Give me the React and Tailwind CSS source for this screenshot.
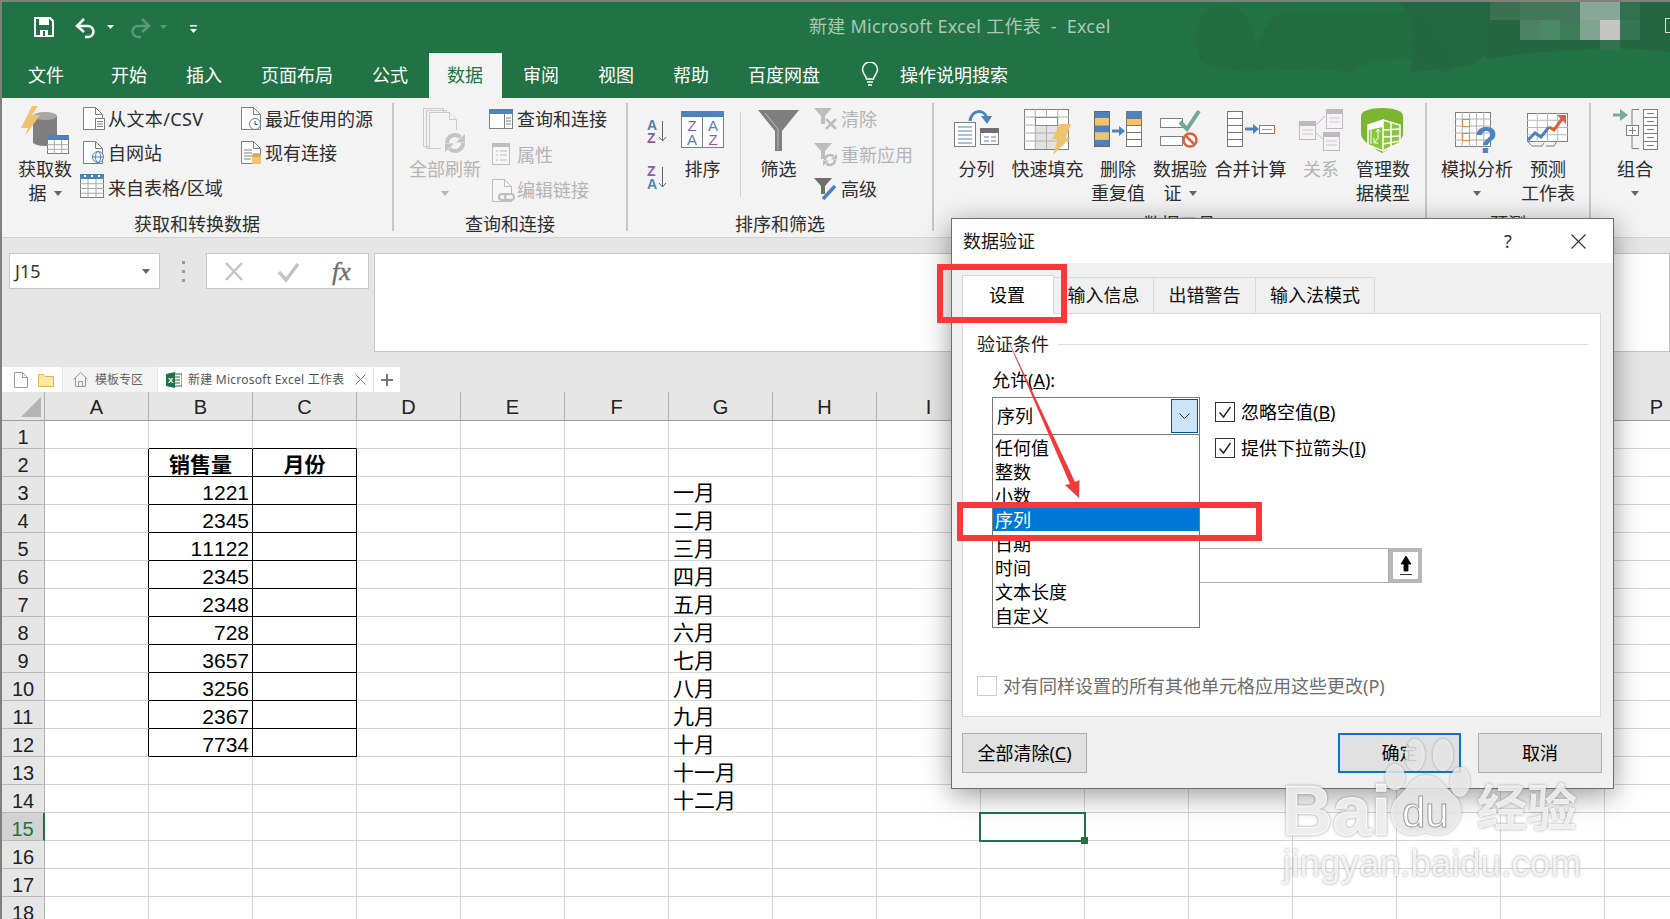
import React from 'react';

const Ico = ({ x, y, w, h, children }) => (
  <svg width={w} height={h} viewBox={`${x} ${y} ${w} ${h}`} className="block flex-none overflow-visible">{children}</svg>
);
const BLUE = '#4e82bc', GR = '#7f7f7f', OR = '#f0c36d', LG = '#bdbdbd', PUR = '#8e5ba8';

const doc = (x, y, c = GR, f = '#fff') => (
  <g fill={f} stroke={c}>
    <path d={`M${x + .5} ${y + .5}h12l7 7v15h-19z`} />
    <path d={`M${x + 12.5} ${y + .5}v7h7`} fill="none" />
  </g>
);
const Caret = ({ c = '#666' }) => (
  <svg width="8" height="5" viewBox="0 0 8 5" className="inline-block flex-none"><path d="M0 0h8L4 5z" fill={c} /></svg>
);

const Large = ({ w, icon, lines, caret, dis }) => (
  <div className={`flex flex-col items-center flex-none ${w} ${dis ? 'text-[#b4b4b4]' : 'text-[#2e2e2e]'}`}>
    <div className="h-[59px] flex justify-center">{icon}</div>
    {lines.map((t, i) => <div key={i} className="leading-[24px] whitespace-nowrap flex items-center gap-[7px]">{t}{caret && i === lines.length - 1 && <Caret />}</div>)}
  </div>
);
const CaretLine = ({ c }) => <div className="h-[24px] flex items-center"><Caret c={c} /></div>;

const Small = ({ iw, icon, text, dis, cls }) => (
  <div className={`h-[35px] flex items-center whitespace-nowrap ${dis ? 'text-[#b4b4b4]' : 'text-[#2e2e2e]'} ${cls || ''}`}>
    <div className={`${iw} h-[35px] flex-none`}>{icon}</div><span>{text}</span>
  </div>
);

const Group = ({ w, label, children }) => (
  <div className={`flex flex-none h-full ${w}`}>
    <div className="flex-1 min-w-0 flex flex-col overflow-hidden">
      <div className="h-[114px] flex">{children}</div>
      <div className="leading-[24px] text-center text-[#2e2e2e] whitespace-nowrap">{label}</div>
    </div>
    <div className="w-[2px] bg-[#c8c8c8] mt-[5px] mb-[6px] flex-none"></div>
  </div>
);

const gridLines = (x, y, w, h, cols, rows, c = '#a6a6a6') => {
  const out = [];
  for (let i = 1; i < cols; i++) out.push(<path key={'c' + i} d={`M${x + w * i / cols} ${y}v${h}`} stroke={c} />);
  for (let i = 1; i < rows; i++) out.push(<path key={'r' + i} d={`M${x} ${y + h * i / rows}h${w}`} stroke={c} />);
  return out;
};

const IcoGet = () => (
  <Ico x={21} y={98} w={48} h={59}>
    <ellipse cx="45" cy="142" rx="12" ry="4" fill={GR} />
    <rect x="33" y="116" width="24" height="27" fill={GR} />
    <ellipse cx="45" cy="116" rx="12" ry="4" fill="#a8a8a8" />
    <path d="M32 106L21 128h7l-3 8 15-21h-8l6-9z" fill={OR} />
    <rect x="47.500" y="135.500" width="21" height="18" fill="#fff" stroke={GR} />
    <rect x="47" y="135" width="22" height="5" fill={BLUE} />
    {gridLines(47, 140, 22, 14, 3, 3)}
  </Ico>
);
const DocLines = ({ x, y }) => (
  <g>
    <rect x={x + .5} y={y + .5} width="9" height="11" fill="#fff" stroke={GR} />
    <path d={`M${x + 2} ${y + 3.5}h6M${x + 2} ${y + 6}h6M${x + 2} ${y + 8.5}h6`} stroke={GR} />
  </g>
);
const I1 = () => <Ico x={80} y={102} w={28} h={35}>{doc(83, 107)}<DocLines x={95} y={118} /></Ico>;
const I2 = () => (
  <Ico x={80} y={136} w={28} h={35}>{doc(83, 141)}
    <circle cx="98" cy="157" r="5.500" fill="#fff" stroke={BLUE} />
    <ellipse cx="98" cy="157" rx="2.500" ry="5.500" fill="none" stroke={BLUE} />
    <path d="M92.500 157h11" stroke={BLUE} />
  </Ico>
);
const I3 = () => (
  <Ico x={80} y={171} w={28} h={35}>
    <rect x="80.500" y="174.500" width="23" height="23" fill="#fff" stroke={GR} />
    {gridLines(80, 179, 24, 19, 3, 4)}
    <rect x="80" y="174" width="24" height="5" fill={BLUE} />
    <path d="M84 175h2v2h-2zM91 175h2v2h-2zM98 175h2v2h-2z" fill="#fff" />
  </Ico>
);
const I4 = () => (
  <Ico x={240} y={102} w={25} h={35}>{doc(241, 107)}
    <circle cx="255" cy="124" r="5.500" fill="#fff" stroke={BLUE} />
    <path d="M255 121v3.500h2.500" stroke="#444" fill="none" />
  </Ico>
);
const I5 = () => (
  <Ico x={240} y={136} w={25} h={35}>{doc(241, 141)}
    <path d="M244 150h8M244 153h8M244 156h8M244 159h7" stroke={GR} />
    <rect x="252" y="155" width="9" height="9" fill={OR} />
    <ellipse cx="256.500" cy="155" rx="4.500" ry="2" fill="#d9a95a" />
  </Ico>
);
const Refresh = ({ cx, cy, r, c, sw = 3 }) => (
  <g fill="none" stroke={c} strokeWidth={sw}>
    <path d={`M${cx - r} ${cy}a${r} ${r} 0 0 1 ${r * 1.7} ${-r * .7}`} />
    <path d={`M${cx + r} ${cy}a${r} ${r} 0 0 1 ${-r * 1.7} ${r * .7}`} />
    <path d={`M${cx + r + 2} ${cy - r - 1}v${r + .5}h${-r - 1}z`} fill={c} stroke="none" />
    <path d={`M${cx - r - 2} ${cy + r + 1}v${-r - .5}h${r + 1}z`} fill={c} stroke="none" />
  </g>
);
const IRefreshAll = () => (
  <Ico x={426} y={98} w={44} h={59}>
    <g fill="#f3f3f3" stroke="#c9c9c9">
      <path d="M426.500 108.500h20v38h-20zM429.500 110.500h20v38h-20z" />
      <path d="M432.500 112.500h20l7 7v29h-27z" />
      <path d="M452.500 112.500v7h7" />
    </g>
    <rect x="444" y="130" width="26" height="26" fill="#f3f3f3" />
    <Refresh cx={458} cy={143} r={8} c="#c4c4c4" sw={4} />
  </Ico>
);
const IQuery = () => (
  <Ico x={489} y={102} w={28} h={35}>
    <rect x="489.500" y="109.500" width="23" height="19" fill="#fff" stroke={GR} />
    <rect x="489" y="109" width="24" height="5" fill={BLUE} />
    <path d="M504.500 114v15M506 118h5M506 121h5M506 124h5" stroke={GR} />
  </Ico>
);
const IProp = () => (
  <Ico x={489} y={138} w={28} h={35}>
    <rect x="492.500" y="143.500" width="17" height="21" fill="#f6f6f6" stroke={LG} />
    <rect x="492" y="143" width="18" height="4" fill={LG} />
    <path d="M496 151h2M500 151h7M496 155h2M500 155h7M496 160h2M500 160h7" stroke={LG} />
  </Ico>
);
const ILink = () => (
  <Ico x={489} y={172} w={28} h={35}>
    {doc(492, 178, LG, '#f6f6f6')}
    <g fill="#f3f3f3" stroke={LG} strokeWidth="2">
      <rect x="499" y="193" width="9" height="6" rx="3" />
      <rect x="505" y="193" width="9" height="6" rx="3" />
    </g>
  </Ico>
);
const IAZ = ({ flip }) => (
  <Ico x={647} y={flip ? 164 : 118} w={21} h={27}>
    <text x="647" y={flip ? 176 : 130} fontSize="14" fontWeight="700" fontFamily="Liberation Sans" fill={flip ? PUR : BLUE}>{flip ? 'Z' : 'A'}</text>
    <text x="647" y={flip ? 189 : 143} fontSize="14" fontWeight="700" fontFamily="Liberation Sans" fill={flip ? BLUE : PUR}>{flip ? 'A' : 'Z'}</text>
    <path d={`M662.500 ${flip ? 167 : 121}v20M659 ${flip ? 183 : 137}l3.500 4 3.500-4`} stroke="#666" fill="none" />
  </Ico>
);
const ISort = () => (
  <Ico x={681} y={98} w={43} h={59}>
    <rect x="681.500" y="111.500" width="42" height="36" fill="#fff" stroke={GR} />
    <rect x="681" y="111" width="43" height="6" fill={BLUE} />
    <path d="M702.500 117v30" stroke={GR} />
    <g fontFamily="Liberation Sans" fontSize="15" textAnchor="middle">
      <text x="692" y="131" fill={PUR}>Z</text><text x="692" y="145" fill={BLUE}>A</text>
      <text x="713" y="131" fill={BLUE}>A</text><text x="713" y="145" fill={PUR}>Z</text>
    </g>
  </Ico>
);
const IFilter = () => (
  <Ico x={758} y={98} w={41} h={59}>
    <path d="M758 110h41l-17 21v20h-7v-20z" fill={GR} />
    <path d="M765 113l13 16v21" stroke="#bdbdbd" fill="none" />
  </Ico>
);
const smallF = (x, y, c) => <path d={`M${x} ${y}h18l-7 8v8h-4v-8z`} fill={c} />;
const IClear = () => (
  <Ico x={814} y={102} w={27} h={35}>{smallF(814, 108, LG)}<path d="M826 119l10 10M836 119l-10 10" stroke={LG} strokeWidth="2.500" /></Ico>
);
const IReapply = () => (
  <Ico x={814} y={138} w={27} h={35}>{smallF(814, 143, LG)}<Refresh cx={830} cy={160} r={5} c={LG} sw={2.500} /></Ico>
);
const IAdv = () => (
  <Ico x={814} y={172} w={27} h={35}>{smallF(814, 178, '#6e6e6e')}<path d="M835 186l-12 13" stroke={BLUE} strokeWidth="3.500" /></Ico>
);
const ISplit = () => (
  <Ico x={954} y={98} w={46} h={59}>
    <rect x="954.500" y="122.500" width="21" height="24" fill="#fff" stroke={GR} />
    <path d="M958 127h14M958 131h14M958 135h14M958 139h14M958 143h14" stroke={BLUE} />
    <rect x="980.500" y="128.500" width="18" height="16" fill="#fff" stroke={GR} />
    <rect x="980" y="128" width="19" height="5" fill="#6e6e6e" />
    <path d="M984 137h5M991 137h5M984 141h5M991 141h5" stroke={BLUE} />
    <path d="M970 121c2-12 14-12 17-3" fill="none" stroke={BLUE} strokeWidth="3" />
    <path d="M981 116h11l-5 8z" fill={BLUE} />
  </Ico>
);
const IFlash = () => (
  <Ico x={1024} y={98} w={48} h={59}>
    <rect x="1024.500" y="109.500" width="44" height="40" fill="#fff" stroke={GR} />
    <rect x="1035" y="126" width="23" height="23" fill="#e2e2e2" />
    {gridLines(1024, 109, 45, 40, 4, 5, '#b0b0b0')}
    <rect x="1035.500" y="117.500" width="22" height="8" fill="#fff" stroke="#6f9f8c" />
    <path d="M1060 124h11l-5 13h5l-18 18 5-16h-6z" fill={OR} />
  </Ico>
);
const IDup = () => (
  <Ico x={1094} y={98} w={48} h={59}>
    {['#4e82bc', OR, '#4e82bc', OR, '#4e82bc'].map((c, i) => <rect key={i} x="1094" y={111 + i * 7.2} width="16" height="7.200" fill={c} />)}
    <rect x="1094.500" y="111.500" width="15" height="35" fill="none" stroke="#666" />
    {['#4e82bc', OR, '#fff', '#fff', '#fff'].map((c, i) => <rect key={i} x="1126.500" y={111.500 + i * 7} width="15" height="7" fill={c} stroke="#777" />)}
    <path d="M1112 131h8" stroke={BLUE} strokeWidth="3" /><path d="M1119 126l6 5-6 5z" fill={BLUE} />
  </Ico>
);
const IValid = () => (
  <Ico x={1160} y={98} w={41} h={59}>
    <rect x="1160.500" y="118.500" width="22" height="9" fill="#fff" stroke={GR} />
    <rect x="1160.500" y="136.500" width="22" height="9" fill="#fff" stroke={GR} />
    <path d="M1180 122l7 7 12-18" fill="none" stroke="#74a996" strokeWidth="4" />
    <circle cx="1190" cy="140" r="6.500" fill="#fff" stroke="#d9603f" strokeWidth="2.500" />
    <path d="M1186 136l8 8" stroke="#d9603f" strokeWidth="2.500" />
  </Ico>
);
const IMerge = () => (
  <Ico x={1226} y={98} w={48} h={59}>
    {[0, 1, 2, 3, 4].map(i => <rect key={i} x="1226.500" y={111.500 + i * 7} width="15" height="7" fill="#fff" stroke="#777" />)}
    <path d="M1244 129h9" stroke={BLUE} strokeWidth="3" /><path d="M1252 124l6 5-6 5z" fill={BLUE} />
    <rect x="1258.500" y="125.500" width="15" height="8" fill="#fff" stroke="#d9603f" />
    <path d="M1261 129.500h10" stroke="#999" />
  </Ico>
);
const IRel = () => {
  const b = (x, y, w, h) => <g key={x}><rect x={x + .5} y={y + .5} width={w} height={h} fill="#f6f3f6" stroke="#bdbabd" /><rect x={x} y={y} width={w + 1} height="5" fill="#bdbabd" /><path d={`M${x + 3} ${y + 9}h${w - 5}M${x + 3} ${y + 13}h${w - 5}`} stroke="#cfc5d0" /></g>;
  return (
    <Ico x={1298} y={98} w={46} h={59}>
      <path d="M1315 126l10-10M1315 132l9 8" stroke="#bdbabd" fill="none" />
      {b(1299, 121, 16, 18)}{b(1326, 109, 16, 19)}{b(1323, 132, 16, 18)}
    </Ico>
  );
};
const IModel = () => (
  <Ico x={1361} y={98} w={44} h={59}>
    <path d="M1361 116c0-5 9-8 21-8s21 3 21 8v18c0 6-10 13-21 19-11-6-21-13-21-19z" fill="#7ab62f" />
    <path d="M1368 125l15-5 17 5v18l-17 8-15-6z" fill="#8cc63f" />
    <path d="M1368 125l15-5v7l-15 3z" fill="#fff" />
    <path d="M1383 120v31l-15-6v-20z" fill="none" stroke="#fff" strokeWidth="1.500" />
    <path d="M1383 120l17 5v18l-17 8" fill="none" stroke="#fff" strokeWidth="1.500" />
    <path d="M1383 130l17-1M1383 137l17-1M1383 144l17-3M1391 123v25" stroke="#fff" strokeWidth="1.500" fill="none" />
    <path d="M1371 128v16" stroke="#fff" />
    <path d="M1378 129v9l-3 4M1376 132l2-3 2 3M1374 138v5h4" stroke="#fff" fill="none" />
  </Ico>
);
const IWhatIf = () => (
  <Ico x={1459} y={98} w={44} h={59}>
    <rect x="1459.500" y="112.500" width="35" height="34" fill="#fff" stroke={GR} />
    {gridLines(1459, 112, 36, 35, 5, 5, '#b0b0b0')}
    <rect x="1466.500" y="119.500" width="7" height="7" fill="#fff" stroke="#e08a3c" />
    <rect x="1466.500" y="133.500" width="7" height="7" fill="#fff" stroke="#e08a3c" />
    <text x="1490" y="153" fontSize="37" fontWeight="700" fontFamily="Liberation Sans" textAnchor="middle" fill={BLUE}>?</text>
  </Ico>
);
const IFore = () => (
  <Ico x={1527} y={98} w={42} h={59}>
    <rect x="1527.500" y="113.500" width="40" height="28" fill="#fff" stroke={GR} />
    {gridLines(1527, 113, 41, 29, 4, 4, '#b8b8b8')}
    <path d="M1527 141l5 5h10l2-3M1546 146h8l3-5" stroke={GR} fill="none" />
    <path d="M1528 140l7-7 6 4 8-10" fill="none" stroke={BLUE} strokeWidth="3" />
    <path d="M1549 127l5 3 8-11" fill="none" stroke="#d9603f" strokeWidth="3" />
    <path d="M1557 115h9v9z" fill="#d9603f" />
  </Ico>
);
const IGroup = () => (
  <Ico x={1612} y={98} w={45} h={59}>
    <path d="M1612 115h9" stroke="#7aab97" strokeWidth="3" /><path d="M1619 109l8 6-8 6z" fill="#7aab97" />
    <path d="M1638 109.500h-7v39h7" fill="none" stroke={GR} />
    <rect x="1625.500" y="125.500" width="12" height="10" fill="#fff" stroke={GR} />
    <path d="M1628 130.500h7M1631.500 127v7" stroke={GR} />
    {[0, 1, 2, 3, 4].map(i => <g key={i}><rect x="1642.500" y={109.500 + i * 8} width="14" height="8" fill="#fff" stroke={GR} /><path d={`M1646 ${113.500 + i * 8}h7`} stroke={BLUE} /></g>)}
  </Ico>
);

const TitleArt = () => (
  <svg width="1668" height="96" viewBox="2 2 1668 96" className="absolute left-0 top-0">
    <path d="M1200 60c-10-30 0-55 22-55 24 0 30 20 34 40 8-12 12-30 30-33h114c20 0 30 8 50 45l-1 18c-12-6-24-16-41-16-20 0-38 0-60 14-20-6-22-2-40-3-35-3-90 8-108-10z" fill="#23693f" opacity=".75" />
    <path d="M1490 2h180v50c-30-2-50-6-90-2-30 2-60 2-92 10-6-6-2-40 2-58z" fill="#236640" />
    <path d="M1398 2h100l-8 50-20 14-60 6c4-20 8-50-12-70z" fill="#236640" opacity=".8" />
    {[
      [1490, 2, 30, 18, '#3b7053'], [1520, 2, 60, 18, '#43775b'], [1580, 2, 40, 18, '#8aa698'], [1620, 2, 20, 18, '#33704f'],
      [1520, 20, 20, 20, '#4c8263'], [1540, 20, 20, 20, '#4c8868'], [1560, 20, 20, 20, '#3e7b59'], [1580, 20, 20, 20, '#7fa491'], [1600, 20, 20, 20, '#c5c5c5'], [1620, 20, 20, 20, '#387556'],
      [1600, 40, 20, 10, '#357050'],
    ].map((r, i) => <rect key={i} x={r[0]} y={r[1]} width={r[2]} height={r[3]} fill={r[4]} />)}
    <rect x="1665.500" y="18.500" width="10" height="14" fill="none" stroke="#cfe3d8" />
  </svg>
);

const cols = ['A', 'B', 'C', 'D', 'E', 'F', 'G', 'H', 'I', 'J', 'K', 'L', 'M', 'N', 'O', 'P'];
const sales = { 3: 1221, 4: 2345, 5: 11122, 6: 2345, 7: 2348, 8: 728, 9: 3657, 10: 3256, 11: 2367, 12: 7734 };
const months = ['一月', '二月', '三月', '四月', '五月', '六月', '七月', '八月', '九月', '十月', '十一月', '十二月'];

const Cell = ({ c, r }) => {
  const ci = cols.indexOf(c);
  const inBox = (ci === 1 || ci === 2) && r >= 2 && r <= 12;
  const rightBlack = (ci === 0 || inBox) && r >= 2 && r <= 12;
  const bottomBlack = (ci === 1 || ci === 2) && r >= 1 && r <= 12;
  let body = null;
  if (r === 2 && c === 'B') body = <div className="text-center font-bold text-[21px]">销售量</div>;
  if (r === 2 && c === 'C') body = <div className="text-center font-bold text-[21px]">月份</div>;
  if (c === 'B' && sales[r]) body = <div className="text-right pr-[3px] [font-kerning:none]">{sales[r]}</div>;
  if (c === 'G' && r >= 3 && r <= 14) body = <div className="pl-[4px]">{months[r - 3]}</div>;
  return (
    <div className={`relative w-[104px] h-[28px] flex-none border-r border-b leading-[32px] text-[21px] text-black whitespace-nowrap ${rightBlack ? 'border-r-black' : 'border-r-[#d4d4d4]'} ${bottomBlack ? 'border-b-black' : 'border-b-[#d4d4d4]'}`}>
      {body}
      {c === 'J' && r === 15 && (
        <div className="absolute left-[-2px] top-[-1px] w-[107px] h-[30px] border-2 border-[#217346] z-10">
          <div className="absolute right-[-4px] bottom-[-4px] w-[7px] h-[7px] bg-[#217346]"></div>
        </div>
      )}
    </div>
  );
};

const Check = ({ on, dis }) => (
  <div className={`w-[20px] h-[20px] flex-none border flex items-center justify-center bg-white ${dis ? 'border-[#cccccc]' : 'border-[#333333]'}`}>
    {on && <svg width="14" height="14" viewBox="0 0 14 14"><path d="M1.500 7.500l4 4.500 7-10" fill="none" stroke="#222" strokeWidth="1.400" /></svg>}
  </div>
);
const DlgBtn = ({ w, children, primary }) => (
  <div className={`${w} h-[40px] flex-none flex items-center justify-center bg-[#e1e1e1] text-black ${primary ? 'border-2 border-[#0078d7]' : 'border border-[#adadad]'}`}><span>{children}</span></div>
);

export default function App() {
  return (
    <div className="relative w-[1670px] h-[919px] overflow-hidden bg-white border-l-2 border-t-2 border-[#808080] text-[18px] font-['Noto_Sans','Noto_Sans_CJK_SC',sans-serif]">
      {/* title + tabs */}
      <div className="relative h-[96px] bg-[#217346]">
        <TitleArt />
        <div className="relative h-[51px] flex items-start pl-[32px]">
          <svg width="170" height="51" viewBox="34 2 170 51" className="flex-none">
            <path d="M35 18h15l3 3v15H35z" fill="none" stroke="#fff" strokeWidth="2" />
            <path d="M39 18h10v7H39zM40 30h8v6h-8z" fill="#fff" /><path d="M43 31h2v5h-2z" fill="#217346" />
            <path d="M84 19l-7 7 7 6M77 26h11a5.500 5.500 0 0 1 0 11h-3" fill="none" stroke="#fff" strokeWidth="2.500" />
            <path d="M107 25h7l-3.500 4z" fill="#fff" />
            <path d="M142 19l7 7-7 6M149 26h-11a5.500 5.500 0 0 0 0 11h3" fill="none" stroke="#5a9a78" strokeWidth="2.500" />
            <path d="M160 25h7l-3.500 4z" fill="#5a9a78" />
            <path d="M190 25h7v1.500h-7zM190 29h7l-3.500 4z" fill="#fff" />
          </svg>
          <div className="ml-[605px] mt-[12px] leading-[24px] tracking-[0.25px] text-[#a9c8b6] whitespace-nowrap">新建 Microsoft Excel 工作表&nbsp; -&nbsp; Excel</div>
        </div>
        <div className="relative h-[45px] flex items-stretch pl-[8px] text-white">
          {['文件', '开始', '插入', '页面布局', '公式', '数据', '审阅', '视图', '帮助', '百度网盘'].map(t => (
            <div key={t} className={`px-[18px] flex items-center pb-[1px] ${t === '文件' ? 'mr-[11px]' : 'mr-[3px]'} ${t === '数据' ? 'bg-[#f3f3f3] text-[#217346] w-[73px]' : ''}`}>{t}</div>
          ))}
          <div className="ml-[20px] flex items-center gap-[21px] pb-[1px]">
            <svg width="18" height="26" viewBox="0 0 18 26" className="flex-none"><path d="M5.500 17c0-3-4-5-4-9.500a7.500 7.500 0 0 1 15 0c0 4.500-4 6.500-4 9.500zM6 20h6M7 23h4" fill="none" stroke="#fff" strokeWidth="1.500" /></svg>
            操作说明搜索
          </div>
        </div>
      </div>

      {/* ribbon */}
      <div className="h-[140px] bg-[#f3f3f3] border-b border-[#d2d2d2] flex overflow-hidden">
        <Group w="w-[392px]" label="获取和转换数据">
          <Large w="w-[54px] ml-[16px]" icon={<IcoGet />} lines={['获取数', '据']} caret />
          <div className="w-[160px] ml-[8px] pt-[4px] flex-none">
            <Small iw="w-[28px]" icon={<I1 />} text={<span className="tracking-[0.4px]">从文本/CSV</span>} />
            <Small iw="w-[28px]" icon={<I2 />} text="自网站" cls="-mt-[1px]" />
            <Small iw="w-[28px]" icon={<I3 />} text="来自表格/区域" />
          </div>
          <div className="pt-[4px]">
            <Small iw="w-[25px]" icon={<I4 />} text="最近使用的源" />
            <Small iw="w-[25px]" icon={<I5 />} text="现有连接" cls="-mt-[1px]" />
          </div>
        </Group>
        <Group w="w-[234px]" label="查询和连接">
          <div className="flex flex-col items-center w-[72px] ml-[15px] flex-none text-[#b4b4b4]">
            <div className="h-[59px]"><IRefreshAll /></div>
            <div className="leading-[24px] whitespace-nowrap">全部刷新</div>
            <CaretLine c="#b4b4b4" />
          </div>
          <div className="ml-[8px] pt-[4px]">
            <Small iw="w-[28px]" icon={<IQuery />} text="查询和连接" />
            <Small iw="w-[28px]" icon={<IProp />} text="属性" dis cls="mt-[1px]" />
            <Small iw="w-[28px]" icon={<ILink />} text="编辑链接" dis />
          </div>
        </Group>
        <Group w="w-[306px]" label="排序和筛选">
          <div className="w-[21px] ml-[19px] flex-none flex flex-col pt-[20px] gap-[19px]"><IAZ /><IAZ flip /></div>
          <Large w="w-[43px] ml-[13px]" icon={<ISort />} lines={['排序']} />
          <div className="w-px h-[85px] mt-[14px] ml-[16px] bg-[#cfcfcf] flex-none"></div>
          <Large w="w-[41px] ml-[17px]" icon={<IFilter />} lines={['筛选']} />
          <div className="ml-[15px] pt-[4px]">
            <Small iw="w-[27px]" icon={<IClear />} text="清除" dis />
            <Small iw="w-[27px]" icon={<IReapply />} text="重新应用" dis cls="mt-[1px] -mb-[1px]" />
            <Small iw="w-[27px]" icon={<IAdv />} text="高级" />
          </div>
        </Group>
        <Group w="w-[493px]" label="数据工具">
          <Large w="w-[71px] ml-[7px]" icon={<ISplit />} lines={['分列']} />
          <Large w="w-[71px]" icon={<IFlash />} lines={['快速填充']} />
          <Large w="w-[70px]" icon={<IDup />} lines={['删除', '重复值']} />
          <Large w="w-[54px]" icon={<IValid />} lines={['数据验', '证']} caret />
          <Large w="w-[71px] ml-[8px]" icon={<IMerge />} lines={['合并计算']} />
          <Large w="w-[70px]" icon={<IRel />} lines={['关系']} dis />
          <Large w="w-[54px]" icon={<IModel />} lines={['管理数', '据模型']} />
        </Group>
        <Group w="w-[164px]" label="预测">
          <div className="flex flex-col items-center w-[72px] ml-[14px] flex-none text-[#2e2e2e]">
            <div className="h-[59px]"><IWhatIf /></div>
            <div className="leading-[24px] whitespace-nowrap">模拟分析</div>
            <CaretLine />
          </div>
          <Large w="w-[54px] ml-[8px]" icon={<IFore />} lines={['预测', '工作表']} />
        </Group>
        <div className="flex flex-none h-full">
          <div className="flex flex-col items-center w-[54px] ml-[17px] flex-none text-[#2e2e2e]">
            <div className="h-[59px]"><IGroup /></div>
            <div className="leading-[24px] whitespace-nowrap">组合</div>
            <CaretLine />
          </div>
        </div>
      </div>

      {/* formula area */}
      <div className="h-[129px] bg-[#e6e6e6] flex items-start pt-[15px] pl-[7px]">
        <div className="w-[151px] h-[36px] flex-none bg-white border border-[#c6c6c6] flex items-center justify-between pl-[5px] pr-[9px] text-[#333]">J15<Caret /></div>
        <div className="w-[46px] h-[36px] flex-none flex flex-col items-center justify-center gap-[6px]">
          <div className="w-[3px] h-[3px] bg-[#9a9a9a]"></div><div className="w-[3px] h-[3px] bg-[#9a9a9a]"></div><div className="w-[3px] h-[3px] bg-[#9a9a9a]"></div>
        </div>
        <div className="w-[163px] h-[36px] flex-none bg-white border border-[#c6c6c6]">
          <svg width="161" height="34" viewBox="207 254 161 34">
            <path d="M226 263l16 17M242 263l-16 17" stroke="#c4c4c4" strokeWidth="2.500" />
            <path d="M279 272l7 8 12-16" fill="none" stroke="#c4c4c4" strokeWidth="3.500" />
            <text x="332" y="280" fontSize="26" fontStyle="italic" fontFamily="Liberation Serif" fill="#6e6e6e" stroke="#6e6e6e" strokeWidth=".4">fx</text>
          </svg>
        </div>
        <div className="flex-1 h-[99px] ml-[5px] bg-white border border-[#c6c6c6]"></div>
      </div>

      {/* file tab strip */}
      <div className="h-[25px] flex bg-[#e6e6e6] text-[12px] text-[#666]">
        <div className="w-[60px] bg-white flex items-center gap-[10px] pl-[12px] flex-none">
          <svg width="14" height="16" viewBox="0 0 14 16"><path d="M.500.500h8l5 5v10h-13zM8.500.500v5h5" fill="#fff" stroke="#9a9a9a" /></svg>
          <svg width="16" height="14" viewBox="0 0 16 14"><path d="M.500 1.500h5l1.500 2h8.500v10H.500z" fill="#ffe7a0" stroke="#d9b65c" /></svg>
        </div>
        <div className="w-[94px] ml-px bg-[#f3f3f3] flex items-center gap-[7px] pl-[10px] flex-none">
          <svg width="15" height="15" viewBox="0 0 15 15"><path d="M.500 7.500l7-7 7 7M2.500 6v8.500h10V6M5.500 14.500v-5h4v5" fill="none" stroke="#999" /></svg>
          模板专区
        </div>
        <div className="w-[215px] ml-px bg-white flex items-center gap-[6px] pl-[8px] flex-none text-[#555]">
          <svg width="16" height="16" viewBox="0 0 16 16" className="flex-none">
            <rect x="6" y="2" width="10" height="12" fill="#fff" stroke="#217346" />
            <path d="M9 5h5M9 8h5M9 11h5" stroke="#217346" />
            <path d="M0 2l9-2v16l-9-2z" fill="#217346" />
            <text x="2" y="11" fontSize="8" fontWeight="700" fontFamily="Liberation Sans" fill="#fff">X</text>
          </svg>
          <span className="whitespace-nowrap tracking-[0.25px]">新建 Microsoft Excel 工作表</span>
          <svg width="11" height="11" viewBox="0 0 11 11" className="flex-none ml-auto mr-[7px]"><path d="M.500.500l10 10M10.500.500l-10 10" stroke="#777" /></svg>
        </div>
        <div className="w-[26px] ml-px bg-white flex items-center justify-center flex-none">
          <svg width="12" height="12" viewBox="0 0 12 12"><path d="M6 0v12M0 6h12" stroke="#777" strokeWidth="2" /></svg>
        </div>
      </div>

      {/* sheet */}
      <div className="flex h-[29px] bg-[#e6e6e6] border-b border-[#9e9e9e] text-[20px] text-[#222] font-['Liberation_Sans','Noto_Sans_CJK_SC',sans-serif]">
        <div className="w-[43px] h-[28px] flex-none border-r border-[#b0b0b0] flex items-end justify-end pr-[3px] pb-[3px]">
          <svg width="20" height="20" viewBox="0 0 20 20"><path d="M20 0v20H0z" fill="#b4b4b4" /></svg>
        </div>
        {cols.map(c => <div key={c} className="w-[104px] h-[28px] flex-none text-center leading-[31px] border-r border-[#b0b0b0]">{c}</div>)}
      </div>
      {Array.from({ length: 18 }, (_, i) => i + 1).map(r => (
        <div key={r} className="flex h-[28px] font-['Liberation_Sans','Noto_Sans_CJK_SC',sans-serif]">
          <div className={`w-[43px] h-[28px] flex-none text-center text-[20px] leading-[32px] border-b border-[#b8b8b8] ${r === 15 ? 'bg-[#d2d2d2] text-[#217346] border-r-2 border-r-[#217346]' : 'bg-[#e6e6e6] text-[#222] border-r border-r-[#b0b0b0]'}`}>{r}</div>
          {cols.map(c => <Cell key={c} c={c} r={r} />)}
        </div>
      ))}

      {/* dialog */}
      <div className="absolute left-[949px] top-[216px] w-[663px] h-[571px] bg-[#f0f0f0] border border-[#6e6e6e] shadow-[0_6px_26px_rgba(0,0,0,0.4)] text-black z-20">
        <div className="h-[44px] bg-white flex items-center pl-[11px] relative">
          <span className="text-[#1a1a1a]">数据验证</span>
          <span className="ml-[463px] w-[20px] text-center text-[#333]">?</span>
          <svg width="15" height="15" viewBox="0 0 15 15" className="ml-[53px]"><path d="M.500.500l14 14M14.500.500l-14 14" stroke="#333" strokeWidth="1.100" /></svg>
        </div>
        <div className="pl-[10px] pr-[12px]">
          <div className="h-[50px] flex items-end pt-[12px]">
            <div className="w-[92px] h-[39px] -mb-px relative z-10 bg-white border border-b-0 border-[#d9d9d9] flex items-center justify-center pr-[2px]">设置</div>
            {[['w-[100px]', '输入信息'], ['w-[102px]', '出错警告'], ['w-[119px]', '输入法模式']].map(([w, t]) => (
              <div key={t} className={`${w} h-[36px] border border-b-0 border-l-0 border-[#d9d9d9] flex items-center justify-center text-[#111]`}>{t}</div>
            ))}
          </div>
          <div className="h-[404px] bg-white border border-[#d9d9d9] pl-[14px] pr-[12px] pt-[19px]">
            <div className="flex items-center h-[22px] gap-[9px]">
              <span className="text-[#222] whitespace-nowrap">验证条件</span>
              <div className="flex-1 h-px bg-[#dcdcdc]"></div>
            </div>
            <div className="ml-[15px]">
              <div className="h-[24px] mt-[13px] leading-[24px]">允许(<span className="underline">A</span>):</div>
              <div className="flex items-start mt-[5px]">
                <div className="relative w-[208px] h-[38px] flex-none bg-white border border-[#7a7a7a] flex items-center justify-between pl-[4px] pr-px">
                  <span>序列</span>
                  <div className="w-[27px] h-[34px] bg-[#cce4f7] border border-[#005499] flex items-center justify-center">
                    <svg width="11" height="7" viewBox="0 0 11 7"><path d="M.500.500l5 5 5-5" fill="none" stroke="#333" /></svg>
                  </div>
                  <div className="absolute left-[-1px] top-[36px] w-[208px] h-[194px] bg-white border border-[#7a7a7a] z-10 leading-[27px]">
                    {['任何值', '整数', '小数', '序列', '日期', '时间', '文本长度', '自定义'].map(t => (
                      <div key={t} className={`h-[24px] pl-[2px] ${t === '序列' ? 'bg-[#0078d7] text-white' : ''}`}>{t}</div>
                    ))}
                  </div>
                </div>
                <div className="ml-[15px] mt-[5px]">
                  <div className="flex items-center gap-[6px] h-[20px] whitespace-nowrap"><Check on /><span>忽略空值(<span className="underline">B</span>)</span></div>
                  <div className="flex items-center gap-[6px] h-[20px] mt-[16px] whitespace-nowrap"><Check on /><span>提供下拉箭头(<span className="underline">I</span>)</span></div>
                </div>
              </div>
              <div className="mt-[90px] flex h-[35px]">
                <div className="w-[397px] bg-white border border-[#adadad]"></div>
                <div className="w-[33px] border-[4px] border-[#b8b8b8] bg-white flex items-center justify-center">
                  <svg width="14" height="20" viewBox="0 0 14 20"><path d="M7 0l5 8H9v7H5V8H2zM1 18.500h12" fill="#000" stroke="#000" strokeWidth=".8" /></svg>
                </div>
              </div>
            </div>
            <div className="flex items-center gap-[6px] h-[20px] mt-[93px] text-[#6d6d6d] whitespace-nowrap"><Check dis /><span>对有同样设置的所有其他单元格应用这些更改(P)</span></div>
          </div>
          <div className="flex mt-[16px]">
            <DlgBtn w="w-[125px]">全部清除(<span className="underline">C</span>)</DlgBtn>
            <div className="w-[251px] flex-none"></div>
            <DlgBtn w="w-[123px]" primary>确定</DlgBtn>
            <div className="w-[17px] flex-none"></div>
            <DlgBtn w="w-[124px]">取消</DlgBtn>
          </div>
        </div>
      </div>

      {/* annotation marks */}
      <div className="absolute left-[935px] top-[262px] w-[130px] h-[59px] border-[6px] border-[#fb3737] z-30"></div>
      <div className="absolute left-[955px] top-[500px] w-[305px] h-[39px] border-[6px] border-[#fb3737] z-30"></div>
      <svg width="90" height="175" viewBox="1000 329 90 175" className="absolute left-[998px] top-[327px] z-30">
        <path d="M1004 331L1075 482l4.500-2-.5 18-14-13 5-1z" fill="#f33a3a" />
      </svg>

      {/* watermark */}
      <div className="absolute left-[1278px] top-[725px] w-[310px] h-[160px] z-40 pointer-events-none font-['Liberation_Sans','Noto_Sans_CJK_SC',sans-serif] [filter:drop-shadow(0_0_1.500px_rgba(100,100,100,0.75))]">
        <svg width="310" height="120" viewBox="1280 727 310 120" className="absolute left-0 top-0">
          <g fill="rgba(255,255,255,.72)">
            <ellipse cx="1395" cy="777" rx="10" ry="13" />
            <ellipse cx="1415" cy="755" rx="10" ry="16" />
            <ellipse cx="1443" cy="755" rx="10" ry="16" />
            <ellipse cx="1460" cy="782" rx="10" ry="15" />
            <path d="M1426 775c14 0 18 12 28 20 14 12 6 40-16 40-6 0-8-2-12-2s-6 2-14 2c-20 1-28-26-14-38 10-8 14-22 28-22z" />
          </g>
        </svg>
        <div className="absolute left-[2px] top-[49px] text-[70px] leading-[70px] font-bold text-white/80 [-webkit-text-stroke:1px_rgba(255,255,255,0.8)]">Bai</div>
        <div className="absolute left-[122px] top-[65px] text-[42px] leading-[42px] text-white [-webkit-text-stroke:1px_rgba(150,150,150,0.9)]">du</div>
        <div className="absolute left-[197px] top-[54px] text-[50px] leading-[56px] font-bold text-white/80">经验</div>
        <div className="absolute left-[3px] top-[116px] text-[37px] leading-[42px] text-white/80 whitespace-nowrap">jingyan.baidu.com</div>
      </div>
    </div>
  );
}
